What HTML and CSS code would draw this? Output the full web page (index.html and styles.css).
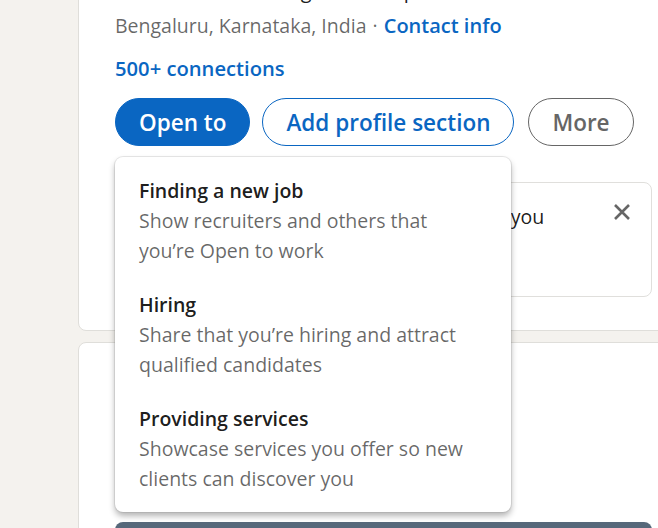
FILE: index.html
```html
<!DOCTYPE html>
<html lang="en">
  <head>
    <meta charset="UTF-8" />
    <meta name="viewport" content="width=device-width, initial-scale=1" />
    <title>Profile</title>
    <link rel="stylesheet" href="styles.css">
  </head>
  <body>
    <div class="main">
      <section class="card profile">
        <div class="headline">Senior Hardware Engineer at Optum</div>
        <div class="location">
          Bengaluru, Karnataka, India <span class="dot">·</span>
          <a class="link" href="#">Contact info</a>
        </div>
        <a class="connections" href="#">500+ connections</a>

        <div class="actions">
          <button class="btn btn-primary">Open to</button>
          <button class="btn btn-outline">Add profile section</button>
          <button class="btn btn-muted">More</button>

          <ul class="dropdown">
            <li class="dropdown-item">
              <div class="item-title">Finding a new job</div>
              <div class="item-desc">Show recruiters and others that you’re Open to work</div>
            </li>
            <li class="dropdown-item">
              <div class="item-title">Hiring</div>
              <div class="item-desc">Share that you’re hiring and attract qualified candidates</div>
            </li>
            <li class="dropdown-item">
              <div class="item-title">Providing services</div>
              <div class="item-desc">Showcase services you offer so new clients can discover you</div>
            </li>
          </ul>
        </div>

        <div class="notice">
          <div class="notice-text">
            <p>Show recruiters you’re open to work — you control who sees this.</p>
            <a class="link" href="#">Get started</a>
          </div>
          <button class="notice-close" aria-label="Dismiss">
            <svg width="18" height="18" viewBox="0 0 18 18">
              <path d="M2 2 L16 16 M16 2 L2 16" stroke="#666" stroke-width="2.6" fill="none" />
            </svg>
          </button>
        </div>
      </section>

      <section class="card next">
        <h2>Suggested for you</h2>
        <p>Private to you</p>
        <div class="banner"></div>
      </section>
    </div>
  </body>
</html>
```

FILE: styles.css
```css
body {
  margin: 0;
  background: #f4f2ee;
  font-family: "Open Sans", "Noto Sans", sans-serif;
  font-size: 19.5px;
  color: rgba(0, 0, 0, 0.9);
  overflow: hidden;
}

a {
  text-decoration: none;
}

.main {
  margin-left: 78px;
  width: 611px;
}

.card {
  background: #fff;
  border: 1px solid #dfdeda;
  border-radius: 8px;
  box-sizing: border-box;
}

.profile {
  margin-top: -47px;
  padding: 23px 36px 33px;
}

.headline {
  font-size: 20px;
  line-height: 28px;
  margin-bottom: 7px;
}

.location {
  line-height: 28px;
  color: rgba(0, 0, 0, 0.6);
}

.dot {
  margin: 0 1px;
}

.link {
  color: #0a66c2;
  font-weight: 600;
  font-size: 20px;
}

.connections {
  display: block;
  margin-top: 14px;
  line-height: 28px;
  font-size: 20.2px;
  color: #0a66c2;
  font-weight: 600;
}

.actions {
  position: relative;
  display: flex;
  gap: 12px;
  margin-top: 16px;
}

.btn {
  height: 48px;
  padding: 0 23px;
  border-radius: 24px;
  border: 1px solid;
  background: #fff;
  font-family: inherit;
  font-size: 22.5px;
  font-weight: 600;
  cursor: pointer;
}

.btn-primary {
  background: #0a66c2;
  border-color: #0a66c2;
  color: #fff;
}

.btn-outline {
  border-color: #0a66c2;
  color: #0a66c2;
}

.btn-muted {
  margin-left: 2px;
  border-color: #666;
  color: #666;
}

.dropdown {
  position: absolute;
  top: 59px;
  left: 0;
  z-index: 2;
  width: 396px;
  margin: 0;
  padding: 6px 0;
  list-style: none;
  background: #fff;
  border-radius: 8px;
  box-shadow: 0 0 0 1px rgba(140, 140, 140, 0.2), 0 4px 6px rgba(0, 0, 0, 0.3);
}

.dropdown-item {
  padding: 12px 32px 12px 24px;
  line-height: 30px;
}

.dropdown-item:first-child {
  padding-top: 13px;
}

.item-title {
  font-weight: 600;
  color: rgba(0, 0, 0, 0.9);
}

.item-desc {
  color: rgba(0, 0, 0, 0.6);
}

.notice {
  display: flex;
  align-items: flex-start;
  margin-top: 36px;
  height: 115px;
  padding: 20px 20px 0 36px;
  border: 1px solid #e0dfdc;
  border-radius: 8px;
  box-sizing: border-box;
}

.notice-text {
  flex: 1;
  padding-right: 40px;
  line-height: 28px;
  color: rgba(0, 0, 0, 0.9);
}

.notice-text p {
  margin: 0;
}

.notice-close {
  width: 18px;
  height: 18px;
  padding: 0;
  border: none;
  background: none;
}

.notice-close svg {
  display: block;
}

.next {
  margin-top: 11px;
  height: 400px;
  padding: 24px 36px 0;
}

.next h2 {
  margin: 0;
  font-size: 22px;
  font-weight: 600;
  line-height: 30px;
}

.next p {
  margin: 0;
  line-height: 24px;
  color: rgba(0, 0, 0, 0.6);
}

.banner {
  margin-top: 101px;
  height: 120px;
  background: #56687a;
  border-radius: 8px 8px 0 0;
}
```
